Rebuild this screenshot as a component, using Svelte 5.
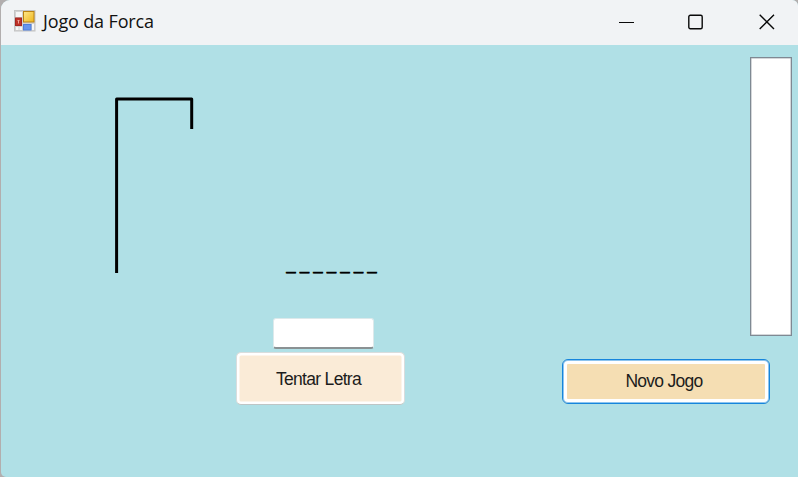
<script>
  let word = $state(Array(7).fill('_'));
  let guess = $state('');
  let tried = $state([]);

  function tryLetter() {
    if (guess) tried.push(guess.toUpperCase());
    guess = '';
  }

  function newGame() {
    word = Array(7).fill('_');
    tried = [];
    guess = '';
  }
</script>

<div class="backdrop">
  <main class="window">
    <header>
      <svg class="app-icon" width="22" height="22" viewBox="0 0 22 22">
        <defs>
          <linearGradient id="gold" x1="0" y1="0" x2="1" y2="1">
            <stop offset="0" stop-color="#ffe88a" />
            <stop offset="1" stop-color="#edb51c" />
          </linearGradient>
        </defs>
        <rect x=".5" y=".5" width="20.5" height="20.5" fill="#d2d2d2" stroke="#c4c4c4" />
        <path d="M2 2h6v5H2zM2 17h2.500v3H2zM5.500 17H8v3H5.500zM18 14h2v6h-2z" fill="#f6f6f6" />
        <rect x="1.500" y="8" width="6" height="7.500" fill="#bd3127" stroke="#a52620" />
        <path d="M3.500 10.500h2M4.500 10v3.500" stroke="#f0a49a" />
        <rect x="9.500" y="1.500" width="10.500" height="10.500" fill="url(#gold)" stroke="#ba8212" />
        <rect x="9.500" y="14.500" width="7.500" height="5.500" fill="#6795ed" stroke="#4e7edc" />
      </svg>
      <h1>Jogo da Forca</h1>
      <div class="controls">
        <svg width="15" height="16"><path d="M0 8.500h15" /></svg>
        <svg width="15" height="16"><rect x=".8" y="1.300" width="13.400" height="13.400" rx="1.500" /></svg>
        <svg width="16" height="16"><path d="M.7.700l14.300 14.300M15 .7L.7 15" /></svg>
      </div>
    </header>

    <section class="form">
      <svg class="gallows" width="80" height="178">
        <path d="M2.600 176V2H77.700V32" />
      </svg>
      <div class="play">
        <div class="word">{word.join(' ')}</div>
        <input bind:value={guess} maxlength="1" aria-label="Letra" />
        <button class="try" onclick={tryLetter}><span>Tentar Letra</span></button>
      </div>
      <div class="side">
        <div class="list">
          {#each tried as letter}<div>{letter}</div>{/each}
        </div>
        <button class="new" onclick={newGame}><span>Novo Jogo</span></button>
      </div>
    </section>
  </main>
</div>

<style>
  :global(body) { margin: 0; overflow: hidden; }
  * { box-sizing: border-box; }
  .backdrop { width: 798px; height: 477px; background: #b2aeae; }
  .window {
    height: 477px;
    margin-left: 1px;
    display: flex;
    flex-direction: column;
    background: #b0e0e6;
    border-radius: 9px 6px 0 5px;
    overflow: hidden;
  }
  header {
    height: 45px;
    flex: none;
    display: flex;
    align-items: center;
    padding: 0 23px 3px 13px;
    background: #f1f3f5;
  }
  h1 {
    margin: 0 0 0 7px;
    font: 400 18px/24px "Open Sans", "Noto Sans", sans-serif;
    letter-spacing: -0.14px;
    color: #111;
  }
  .controls { display: flex; gap: 54px; margin: 1px 0 0 auto; }
  .controls svg { fill: none; stroke: #090909; stroke-width: 1.4; }
  .controls svg:nth-child(2) { margin-right: 2px; }
  .controls svg:first-child { stroke-width: 1; }
  .form { flex: 1; display: flex; align-items: flex-start; padding: 12px 6px 0 113px; }
  .gallows { margin-top: 40px; fill: none; stroke: #000; stroke-width: 3; stroke-linejoin: round; }
  .play {
    display: flex;
    flex-direction: column;
    align-items: flex-start;
    margin: 197px 0 0 42px;
    width: 170px;
  }
  .word {
    margin-left: 50.5px;
    height: 20px;
    font: 16.2px/20px "Liberation Sans", Arial, sans-serif;
    white-space: nowrap;
    -webkit-text-stroke: 0.8px #000;
  }
  input {
    margin: 44px 0 3px 37px;
    width: 101px;
    height: 31px;
    padding: 2px 6px;
    border: 1px solid #dce9eb;
    border-bottom: 2px solid #8a9193;
    border-radius: 3px;
    background: #fff;
    font: 17px "Liberation Sans", Arial, sans-serif;
    outline: none;
  }
  button {
    padding: 0 4px 2px 0;
    color: #1c1c1c;
    font: 17.5px/20px "Liberation Sans", Arial, sans-serif;
  }
  .try {
    width: 169px;
    height: 53px;
    padding: 1px 4px 0 0;
    background: #faebd7;
    border: 1px solid #d9dddd;
    border-bottom-color: #bfc5c5;
    border-radius: 5px;
    box-shadow: inset 0 0 0 2.5px #fff;
    letter-spacing: -0.7px;
  }
  .side { margin-left: auto; width: 230px; display: flex; flex-direction: column; }
  .list {
    align-self: flex-end;
    width: 42px;
    height: 279px;
    border: 1px solid #7f8993;
    box-shadow: inset 0 0 0 0.5px #aab0b6;
    background: #fff;
    font: 16px/20px "Liberation Sans", Arial, sans-serif;
  }
  .new {
    margin-top: 23px;
    width: 208px;
    height: 45px;
    background: #f5deb3;
    border: 1px solid #1685dc;
    border-radius: 6px;
    box-shadow: inset 0 0 0 1px #8cc4ef, inset 0 0 0 4px #fff;
    letter-spacing: -0.72px;
  }
</style>
